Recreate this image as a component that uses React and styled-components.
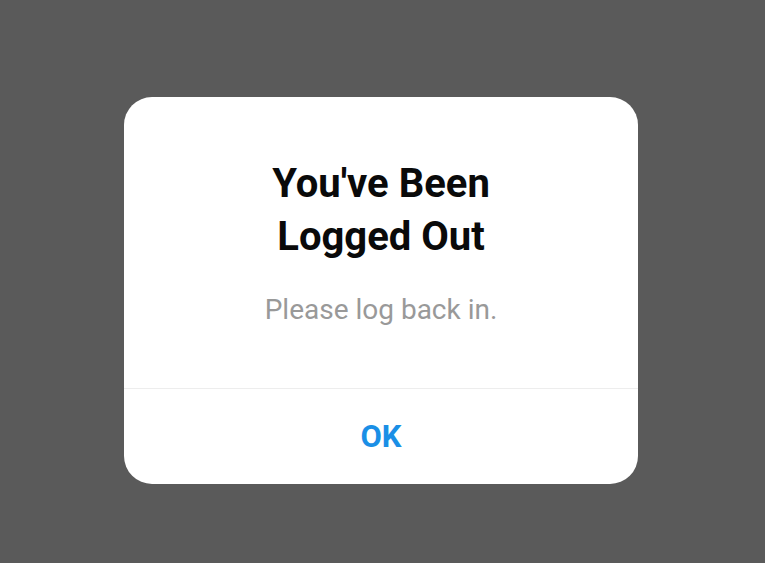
import styled, { createGlobalStyle } from 'styled-components';

const GlobalStyle = createGlobalStyle`
  html, body {
    margin: 0;
    height: 100%;
  }
  body {
    background: #5a5a5a;
    font-family: Roboto, "Noto Sans", sans-serif;
  }
  #root {
    height: 100%;
  }
`;

export default function App() {
  return (
    <>
      <GlobalStyle />
      <Overlay>
        <Dialog>
          <Body>
            <Title>You've Been<br />Logged Out</Title>
            <Message>Please log back in.</Message>
          </Body>
          <Action>OK</Action>
        </Dialog>
      </Overlay>
    </>
  );
}

const Overlay = styled.div`
  height: 563px;
  display: flex;
  justify-content: center;
  padding-top: 97px;
  box-sizing: border-box;
`;

const Dialog = styled.div`
  width: 514px;
  height: 387px;
  margin-left: -3px;
  background: #fff;
  border-radius: 28px;
  display: flex;
  flex-direction: column;
  overflow: hidden;
`;

const Body = styled.div`
  flex: 1;
  padding-top: 60px;
  text-align: center;
  border-bottom: 1px solid #ededed;
`;

const Title = styled.h1`
  margin: 0;
  font-size: 40px;
  line-height: 53px;
  font-weight: 700;
  color: #0a0a0a;
`;

const Message = styled.p`
  margin: 31px 0 0;
  font-size: 28px;
  line-height: 32px;
  color: #999;
`;

const Action = styled.button`
  height: 95px;
  border: none;
  background: none;
  font-family: inherit;
  font-size: 31px;
  font-weight: 700;
  color: #1a8fe6;
  cursor: pointer;
`;
